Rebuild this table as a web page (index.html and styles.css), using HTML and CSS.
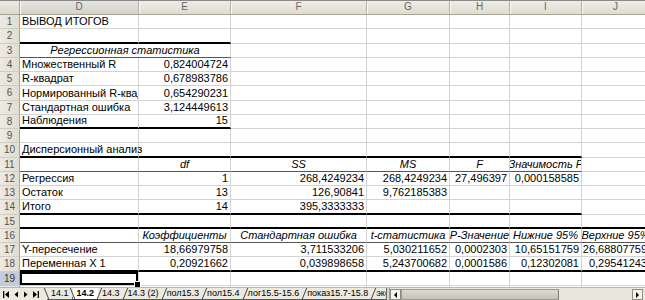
FILE: index.html
```html
<!DOCTYPE html>
<html lang="ru">
<head>
<meta charset="utf-8">
<title>Вывод итогов</title>
<link rel="stylesheet" href="styles.css">
</head>
<body>
<div class="window">
  <div class="sheet">
    <div class="corner"></div>
    <div class="ch sel">D</div><div class="ch">E</div><div class="ch">F</div><div class="ch">G</div><div class="ch">H</div><div class="ch">I</div><div class="ch">J</div>

    <div class="rh">1</div><div class="c ov">ВЫВОД ИТОГОВ</div><div class="c"></div><div class="c"></div><div class="c"></div><div class="c"></div><div class="c"></div><div class="c"></div>
    <div class="rh">2</div><div class="c bk"></div><div class="c bk"></div><div class="c"></div><div class="c"></div><div class="c"></div><div class="c"></div><div class="c"></div>
    <div class="rh">3</div><div class="c i th span2">Регрессионная статистика</div><div class="c"></div><div class="c"></div><div class="c"></div><div class="c"></div><div class="c"></div>
    <div class="rh">4</div><div class="c">Множественный R</div><div class="c n">0,824004724</div><div class="c"></div><div class="c"></div><div class="c"></div><div class="c"></div><div class="c"></div>
    <div class="rh">5</div><div class="c">R-квадрат</div><div class="c n">0,678983786</div><div class="c"></div><div class="c"></div><div class="c"></div><div class="c"></div><div class="c"></div>
    <div class="rh">6</div><div class="c">Нормированный R-квадрат</div><div class="c n">0,654290231</div><div class="c"></div><div class="c"></div><div class="c"></div><div class="c"></div><div class="c"></div>
    <div class="rh">7</div><div class="c">Стандартная ошибка</div><div class="c n">3,124449613</div><div class="c"></div><div class="c"></div><div class="c"></div><div class="c"></div><div class="c"></div>
    <div class="rh">8</div><div class="c bk">Наблюдения</div><div class="c n bk">15</div><div class="c"></div><div class="c"></div><div class="c"></div><div class="c"></div><div class="c"></div>
    <div class="rh">9</div><div class="c"></div><div class="c"></div><div class="c"></div><div class="c"></div><div class="c"></div><div class="c"></div><div class="c"></div>
    <div class="rh">10</div><div class="c ov bk">Дисперсионный анализ</div><div class="c bk"></div><div class="c bk"></div><div class="c bk"></div><div class="c bk"></div><div class="c bk"></div><div class="c"></div>
    <div class="rh">11</div><div class="c th"></div><div class="c i th">df</div><div class="c i th">SS</div><div class="c i th">MS</div><div class="c i th">F</div><div class="c i th">Значимость F</div><div class="c"></div>
    <div class="rh">12</div><div class="c">Регрессия</div><div class="c n">1</div><div class="c n">268,4249234</div><div class="c n">268,4249234</div><div class="c n">27,496397</div><div class="c n">0,000158585</div><div class="c"></div>
    <div class="rh">13</div><div class="c">Остаток</div><div class="c n">13</div><div class="c n">126,90841</div><div class="c n">9,762185383</div><div class="c"></div><div class="c"></div><div class="c"></div>
    <div class="rh">14</div><div class="c bk">Итого</div><div class="c n bk">14</div><div class="c n bk">395,3333333</div><div class="c bk"></div><div class="c bk"></div><div class="c bk"></div><div class="c"></div>
    <div class="rh">15</div><div class="c bk"></div><div class="c bk"></div><div class="c bk"></div><div class="c bk"></div><div class="c bk"></div><div class="c bk"></div><div class="c bk"></div>
    <div class="rh">16</div><div class="c th"></div><div class="c i th">Коэффициенты</div><div class="c i th">Стандартная ошибка</div><div class="c i th">t-статистика</div><div class="c i th">P-Значение</div><div class="c i th">Нижние 95%</div><div class="c i th">Верхние 95%</div>
    <div class="rh">17</div><div class="c">Y-пересечение</div><div class="c n">18,66979758</div><div class="c n">3,711533206</div><div class="c n">5,030211652</div><div class="c n">0,0002303</div><div class="c n">10,65151759</div><div class="c n">26,68807759</div>
    <div class="rh">18</div><div class="c bk">Переменная X 1</div><div class="c n bk">0,20921662</div><div class="c n bk">0,039898658</div><div class="c n bk">5,243700682</div><div class="c n bk">0,0001586</div><div class="c n bk">0,12302081</div><div class="c n bk">0,29541243</div>
    <div class="rh rsel">19</div><div class="c active"></div><div class="c"></div><div class="c"></div><div class="c"></div><div class="c"></div><div class="c"></div><div class="c"></div>
    <div class="rh">20</div><div class="c"></div><div class="c"></div><div class="c"></div><div class="c"></div><div class="c"></div><div class="c"></div><div class="c"></div>
  </div>

  <div class="bar">
    <div class="nav">
      <svg width="9" height="9" viewBox="0 0 9 9"><rect x="1" y="1" width="1.3" height="7" fill="#000"/><path d="M7 1 L3 4.5 L7 8 Z" fill="#000"/></svg>
      <svg width="9" height="9" viewBox="0 0 9 9"><path d="M6 1.5 L2.5 4.5 L6 7.5 Z" fill="#000"/></svg>
      <svg width="9" height="9" viewBox="0 0 9 9"><path d="M3 1.5 L6.5 4.5 L3 7.5 Z" fill="#000"/></svg>
      <svg width="9" height="9" viewBox="0 0 9 9"><path d="M2 1 L6 4.5 L2 8 Z" fill="#000"/><rect x="6.7" y="1" width="1.3" height="7" fill="#000"/></svg>
    </div>
    <div class="tabs">
      <span class="tab first">14.1</span>
      <span class="tab active-tab">14.2</span>
      <span class="tab">14.3</span>
      <span class="tab">14.3 (2)</span>
      <span class="tab">пол15.3</span>
      <span class="tab">пол15.4</span>
      <span class="tab">лог15.5-15.6</span>
      <span class="tab">показ15.7-15.8</span>
      <span class="tab">экспонента</span>
    </div>
    <div class="split"></div>
    <div class="hscroll">
      <div class="sbtn"><svg width="7" height="8" viewBox="0 0 7 8"><path d="M5 1 L2 4 L5 7 Z" fill="#000"/></svg></div>
      <div class="thumb"></div>
      <div class="track"></div>
      <div class="sbtn"><svg width="7" height="8" viewBox="0 0 7 8"><path d="M2 1 L5 4 L2 7 Z" fill="#000"/></svg></div>
    </div>
  </div>
</div>
</body>
</html>
```

FILE: styles.css
```css
* { box-sizing: border-box; }
html, body { margin: 0; padding: 0; background: #fff; }
body { font-family: "Liberation Sans", Arial, sans-serif; }

.window {
  width: 645px;
  height: 300px;
  overflow: hidden;
  display: flex;
  flex-direction: column;
}

.sheet {
  display: grid;
  grid-template-columns: 20px 119px 92px 136px 83px 60px 72px 68px;
  grid-template-rows: 14px repeat(20, 14.25px);
  width: 645px;
  height: 287px;
  overflow: hidden;
  flex: none;
  border-top: 1px solid #8a8a8a;
}

.corner {
  background: linear-gradient(#eceae2, #dcd9ce);
  border-right: 1px solid #a7a496;
  border-bottom: 1px solid #a7a496;
}

.ch {
  background: linear-gradient(#efede6, #dedbd0);
  border-right: 1px solid #b3b0a4;
  border-bottom: 1px solid #a7a496;
  box-shadow: inset 1px 0 0 #fbfaf6;
  font-size: 10px;
  line-height: 12px;
  color: #666;
  text-align: center;
}
.ch.sel { background: linear-gradient(#e6e5e0, #d3d2cb); }

.rh {
  background: linear-gradient(90deg, #eceae2, #e0ddd2);
  border-right: 1px solid #a7a496;
  border-bottom: 1px solid #cfccc0;
  font-size: 10px;
  line-height: 13px;
  color: #555;
  text-align: center;
}
.rh.rsel { background: #c3cbdc; color: #333; }

.c {
  border-right: 1px solid #d3d3d3;
  border-bottom: 1px solid #d3d3d3;
  font-size: 11px;
  line-height: 13px;
  color: #000;
  padding: 0 2px;
  white-space: nowrap;
  overflow: hidden;
  display: flex;
  align-items: flex-end;
  min-width: 0;
}
.c.n { justify-content: flex-end; }
.c.i { justify-content: center; font-style: italic; }
.c.ov { overflow: visible; position: relative; z-index: 1; }
.c.span2 { grid-column: span 2; }
.c.bk { border-bottom: 2px solid #000; }
.c.th { border-bottom: 1px solid #555; }

.c.active {
  position: relative;
  overflow: visible;
  box-shadow: inset 0 0 0 2px #000;
  z-index: 2;
}
.c.active::after {
  content: "";
  position: absolute;
  right: -3px;
  bottom: -3px;
  width: 5px;
  height: 5px;
  background: #000;
  border: 1px solid #fff;
}

.bar {
  display: flex;
  height: 13px;
  flex: none;
  background: #ece9df;
  border-top: 1px solid #b9b6aa;
  font-size: 9px;
}

.nav {
  width: 42px;
  flex: none;
  display: flex;
  align-items: center;
  justify-content: space-around;
  padding: 0 2px;
}
.nav svg { display: block; }

.tabs {
  width: 344px;
  flex: none;
  display: flex;
  overflow: hidden;
  padding-left: 5px;
}

.tab {
  position: relative;
  padding: 0 4px;
  line-height: 11px;
  color: #000;
  white-space: nowrap;
  border-bottom: 1px solid #555;
  flex: none;
}
.tab::after {
  content: "";
  position: absolute;
  right: -2px;
  top: 0;
  bottom: 0;
  border-left: 1px solid #444;
  transform: skewX(-22deg);
}
.tab.first::before {
  content: "";
  position: absolute;
  left: -1px;
  top: 0;
  bottom: 0;
  border-left: 1px solid #444;
  transform: skewX(22deg);
}
.tab.active-tab {
  background: #fff;
  font-weight: bold;
  border-bottom-color: #333;
}
.tab.active-tab::before {
  content: "";
  position: absolute;
  left: -1px;
  top: 0;
  bottom: 0;
  border-left: 1px solid #444;
  transform: skewX(22deg);
}

.split {
  width: 4px;
  flex: none;
  border-left: 1px solid #666;
  border-right: 1px solid #999;
  background: #d8d5ca;
}

.hscroll {
  flex: 1;
  display: flex;
  align-items: stretch;
  padding: 1px 2px 0 0;
}
.sbtn {
  width: 11px;
  flex: none;
  background: #f4f3ee;
  border: 1px solid #8e8b80;
  display: flex;
  align-items: center;
  justify-content: center;
}
.thumb {
  width: 158px;
  flex: none;
  background: linear-gradient(#dcdad2, #c4c2b8);
  border: 1px solid #9c998e;
  border-right-color: #7f7c72;
}
.track {
  flex: 1;
  background: #e8e6dd;
}
```
